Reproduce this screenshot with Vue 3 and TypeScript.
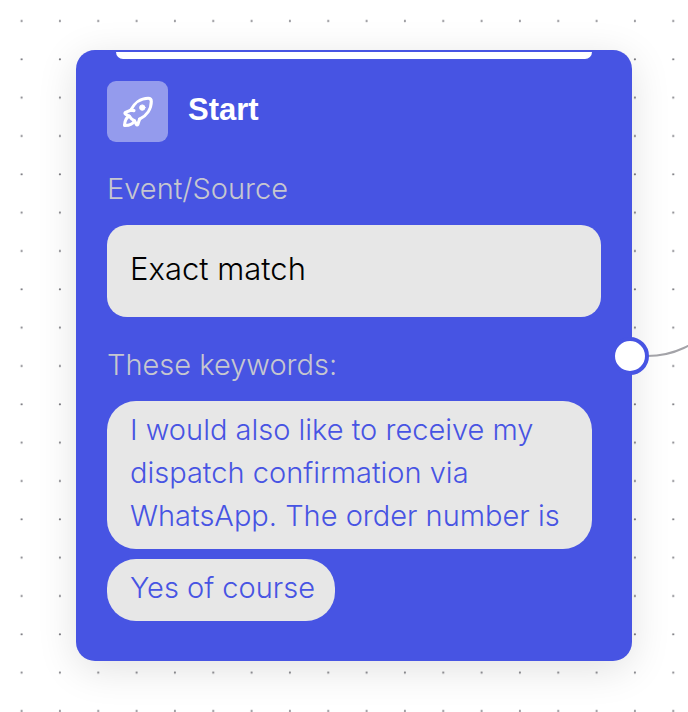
<script setup lang="ts">
import { ref } from 'vue'

interface TriggerNode {
  title: string
  sourceLabel: string
  source: string
  keywordsLabel: string
  keywords: string[]
}

const node = ref<TriggerNode>({
  title: 'Start',
  sourceLabel: 'Event/Source',
  source: 'Exact match',
  keywordsLabel: 'These keywords:',
  keywords: [
    'I would also like to receive my dispatch confirmation via WhatsApp. The order number is',
    'Yes of course',
  ],
})

const gridStep = 115 / 3
</script>

<template>
  <main class="canvas">
    <svg class="grid" aria-hidden="true">
      <defs>
        <pattern id="dots" x="2" y="2" :width="gridStep" :height="gridStep" patternUnits="userSpaceOnUse">
          <circle cx="19.6" cy="19" r="1.1" fill="#7c7c82" />
        </pattern>
      </defs>
      <rect width="100%" height="100%" fill="url(#dots)" />
    </svg>

    <article class="node">
      <div class="strip"></div>
      <header class="head">
        <span class="badge">
          <svg class="rocket" viewBox="0 0 32 32" fill="none" stroke="#fff" stroke-width="3.1" stroke-linecap="round" stroke-linejoin="round" aria-hidden="true">
            <path d="M8.7 14.2C12 7.4 18.5 2.3 26.2 2.3Q29.3 2.3 29.3 5.4C29.3 13 24.5 19.7 17.6 23.1" />
            <path d="M8.7 14.2L3.5 16.4Q2.3 17.1 3.5 18.1L7.4 20.3Q9.4 23.7 12.5 24.7L14.3 28.3Q15.1 29.5 15.9 28.3L17.6 23.1" />
            <path d="M7.2 20.2C3.5 21.7 2.7 25.5 2.5 29.4C6.4 29.5 10.6 28.6 12.4 24.8" />
            <path d="M8.7 14.2L12 14.6" />
            <circle cx="20.3" cy="11.6" r="2.7" fill="#fff" stroke-width="1" />
          </svg>
        </span>
        <h1 class="title">{{ node.title }}</h1>
      </header>

      <section class="field">
        <h2 class="label">{{ node.sourceLabel }}</h2>
        <div class="source">{{ node.source }}</div>
      </section>

      <section class="field">
        <h2 class="label">{{ node.keywordsLabel }}</h2>
        <ul class="keywords">
          <li v-for="word in node.keywords" :key="word" class="keyword">{{ word }}</li>
        </ul>
      </section>

      <svg class="edge" viewBox="0 0 80 60" fill="none" aria-hidden="true">
        <path d="M0 40C24 40 48 32 78 0" stroke="#a3a3a8" stroke-width="2" />
      </svg>
      <button class="port" type="button" aria-label="Connect"></button>
    </article>
  </main>
</template>

<style>
body {
  margin: 0;
  background: #fff;
}
</style>

<style scoped>
.canvas {
  position: relative;
  box-sizing: border-box;
  min-height: 100vh;
  padding: 50px 56px 50px 76px;
  overflow: hidden;
  font-family: Inter, "Liberation Sans", sans-serif;
  font-weight: 300;
}

.grid {
  position: absolute;
  inset: 0;
  width: 100%;
  height: 100%;
}

.node {
  position: relative;
  box-sizing: border-box;
  padding: 2px 31px 40px;
  border-radius: 19px;
  background: #4754e3;
  box-shadow: 0 8px 40px rgba(0, 0, 0, 0.12);
}

.strip {
  height: 7px;
  margin: 0 9px;
  border-radius: 0 0 8px 8px;
  background: #fff;
}

.head {
  display: flex;
  align-items: center;
  gap: 20px;
  margin-top: 22px;
}

.badge {
  display: flex;
  align-items: center;
  justify-content: center;
  width: 61px;
  height: 61px;
  border-radius: 9px;
  background: #949bed;
}

.rocket {
  width: 32px;
  height: 32px;
}

.title {
  margin: 0;
  padding-bottom: 4px;
  color: #fff;
  font-family: "Liberation Sans", sans-serif;
  font-size: 31px;
  font-weight: 700;
  line-height: 36px;
}

.field {
  margin-top: 26px;
}

.field + .field {
  margin-top: 27px;
}

.label {
  margin: 0 0 16px;
  color: #c6c7cf;
  font-size: 29px;
  font-weight: 300;
  line-height: 41px;
}

.source {
  padding: 22px 23px 27px;
  border-radius: 20px;
  background: #e7e7e7;
  color: #000;
  font-size: 31px;
  line-height: 43px;
}

.keywords {
  display: flex;
  flex-direction: column;
  align-items: flex-start;
  gap: 10px;
  margin: 0;
  padding: 0 9px 0 0;
  list-style: none;
}

.keyword {
  padding: 7px 20px 12px 23px;
  border-radius: 29px;
  background: #e7e7e7;
  color: #4754e3;
  font-size: 29px;
  line-height: 43px;
}

.port {
  position: absolute;
  top: 50%;
  right: -17px;
  box-sizing: border-box;
  width: 38px;
  height: 38px;
  padding: 0;
  transform: translateY(-50%);
  border: 4px solid #4754e3;
  border-radius: 50%;
  background: #fff;
}

.edge {
  position: absolute;
  top: 50%;
  left: 100%;
  width: 80px;
  height: 60px;
  margin: -40px 0 0 15px;
}
</style>
